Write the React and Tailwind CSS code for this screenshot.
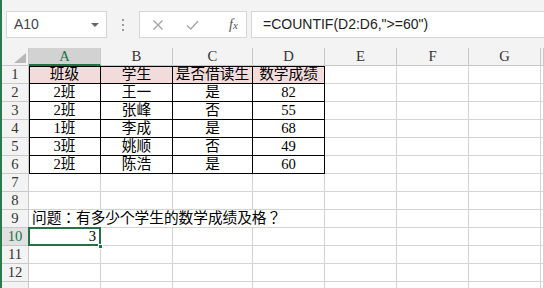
import React from 'react';

const cols = ['A', 'B', 'C', 'D', 'E', 'F', 'G', 'H'];

const tableRows = [
  ['班级', '学生', '是否借读生', '数学成绩'],
  ['2班', '王一', '是', '82'],
  ['2班', '张峰', '否', '55'],
  ['1班', '李成', '是', '68'],
  ['3班', '姚顺', '否', '49'],
  ['2班', '陈浩', '是', '60'],
];

const cellFont = { fontFamily: '"Liberation Serif", "Noto Sans CJK SC", serif' };

const Cell = ({ children, className = '' }) => (
  <div
    className={`h-[18px] flex items-center justify-center border-r border-b border-[#d4d4d4] text-[14.67px] leading-none text-black overflow-visible whitespace-nowrap ${className}`}
  >
    {children}
  </div>
);

const RowHead = ({ n, active }) => (
  <div
    className={`h-[18px] flex items-center justify-center border-r border-b border-[#c8c8c8] text-[14.67px] leading-none ${
      active ? 'bg-[#e1e1e1] text-[#217346]' : 'bg-[#f3f3f3] text-[#333]'
    }`}
  >
    {n}
  </div>
);

const App = () => {
  const emptyTail = ['E', 'F', 'G', 'H'];

  return (
    <div className="w-[544px] h-[288px] overflow-hidden bg-white border-l-2 border-[#2a7a4d] flex flex-col">
      {/* formula bar */}
      <div className="h-[48px] shrink-0 bg-[#f3f3f3] pt-[11px] flex items-start">
        <div className="ml-[4px] w-[101px] h-[27px] bg-white border border-[#d6d6d6] flex items-center justify-between pl-[7px] pr-[7px]">
          <span className="text-[14px] text-[#444]" style={{ fontFamily: '"Liberation Sans", sans-serif' }}>
            A10
          </span>
          <span className="w-0 h-0 border-l-[4px] border-r-[4px] border-t-[4px] border-l-transparent border-r-transparent border-t-[#666]" />
        </div>
        <div className="w-[32px] h-[27px] flex flex-col items-center justify-center gap-[3px]">
          <span className="w-[2px] h-[2px] bg-[#9a9a9a]" />
          <span className="w-[2px] h-[2px] bg-[#9a9a9a]" />
          <span className="w-[2px] h-[2px] bg-[#9a9a9a]" />
        </div>
        <div className="w-[108px] h-[27px] bg-white border border-[#d6d6d6] flex items-center pl-[12px]">
          <svg width="12" height="12" viewBox="0 0 12 12" className="mr-[22px]">
            <path d="M1.5 1.5 L10.5 10.5 M10.5 1.5 L1.5 10.5" stroke="#a6a6a6" strokeWidth="1.4" fill="none" />
          </svg>
          <svg width="13" height="12" viewBox="0 0 13 12" className="mr-[30px]">
            <path d="M1 6.5 L4.8 10 L12 2" stroke="#a6a6a6" strokeWidth="1.4" fill="none" />
          </svg>
          <span className="text-[14px] italic text-[#555]" style={{ fontFamily: '"Liberation Serif", serif' }}>
            f<span className="text-[11px]">x</span>
          </span>
        </div>
        <div className="ml-[4px] flex-1 h-[27px] bg-white border border-[#d6d6d6] border-r-0 flex items-center pl-[11px]">
          <span className="text-[14px] text-[#222]" style={{ fontFamily: '"Liberation Sans", sans-serif' }}>
            =COUNTIF(D2:D6,"&gt;=60")
          </span>
        </div>
      </div>

      {/* sheet */}
      <div
        className="grid grid-cols-[27px_72px_72px_80px_72px_72px_72px_72px_3px] auto-rows-[18px]"
        style={cellFont}
      >
        {/* column headers */}
        <div className="h-[18px] bg-[#f3f3f3] border-r border-b border-[#c8c8c8] relative">
          <svg width="12" height="10" viewBox="0 0 12 10" className="absolute right-[2px] bottom-[2px]">
            <path d="M12 0 L12 10 L0 10 Z" fill="#b8b8b8" />
          </svg>
        </div>
        {cols.map((c) =>
          c === 'A' ? (
            <div
              key={c}
              className="h-[18px] bg-[#d2d2d2] border-r border-[#c8c8c8] border-b-2 border-b-[#217346] flex items-center justify-center text-[14.67px] leading-none text-[#217346]"
            >
              {c}
            </div>
          ) : (
            <div
              key={c}
              className="h-[18px] bg-[#f3f3f3] border-r border-b border-[#c8c8c8] flex items-center justify-center text-[14.67px] leading-none text-[#333]"
            >
              {c === 'H' ? '' : c}
            </div>
          )
        )}

        {/* data table rows 1-6 */}
        {tableRows.map((row, i) => (
          <React.Fragment key={i}>
            <RowHead n={i + 1} />
            {row.map((v, j) => (
              <Cell
                key={j}
                className={`border-r-black border-b-black ${i === 0 ? 'bg-[#f2dcdb]' : ''} ${
                  i === 0 && j === 0
                    ? 'shadow-[inset_1px_1px_0_#000]'
                    : i === 0
                    ? 'shadow-[inset_0_1px_0_#000]'
                    : j === 0
                    ? 'shadow-[inset_1px_0_0_#000]'
                    : ''
                }`}
              >
                {v}
              </Cell>
            ))}
            {emptyTail.map((c) => (
              <Cell key={c} />
            ))}
          </React.Fragment>
        ))}

        {/* rows 7-8 */}
        {[7, 8].map((n) => (
          <React.Fragment key={n}>
            <RowHead n={n} />
            {cols.map((c) => (
              <Cell key={c} />
            ))}
          </React.Fragment>
        ))}

        {/* row 9 */}
        <RowHead n={9} />
        <Cell className="col-span-4 justify-start pl-[3px]">
          <span style={{ fontFamily: '"Liberation Serif", "Noto Sans CJK JP", serif' }}>问题：有多少个学生的数学成绩及格？</span>
        </Cell>
        {emptyTail.map((c) => (
          <Cell key={c} />
        ))}

        {/* row 10 - selected */}
        <RowHead n={10} active />
        <div className="h-[18px] relative border-r border-b border-[#d4d4d4] flex items-center justify-end pr-[4px] text-[14.67px] leading-none text-black">
          3
          <div className="absolute -left-px -top-[1px] -right-px -bottom-px border-2 border-[#217346] pointer-events-none" />
          <div className="absolute -right-[3px] -bottom-[4px] w-[5px] h-[5px] bg-[#217346] border border-white z-10" />
        </div>
        {cols.slice(1).map((c) => (
          <Cell key={c} />
        ))}

        {/* rows 11-13 */}
        {[11, 12, ''].map((n, k) => (
          <React.Fragment key={k}>
            <RowHead n={n} />
            {cols.map((c) => (
              <Cell key={c} />
            ))}
          </React.Fragment>
        ))}
      </div>
    </div>
  );
};

export default App;
